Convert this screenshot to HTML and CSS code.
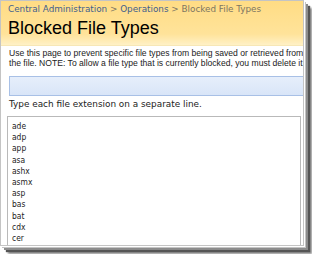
FILE: index.html
```html
<!DOCTYPE html>
<html>
<head>
<meta charset="utf-8">
<link rel="stylesheet" href="styles.css">
</head>
<body>
<div class="frame">
  <div class="header">
    <div class="crumbs"><span class="link">Central Administration</span> <span class="sep">&gt;</span> <span class="link">Operations</span> <span class="sep">&gt;</span> <span class="current">Blocked File Types</span></div>
    <h1 class="title">Blocked File Types</h1>
  </div>
  <div class="body">
    <p class="desc">Use this page to prevent specific file types from being saved or retrieved from<br>the file. NOTE: To allow a file type that is currently blocked, you must delete it</p>
    <div class="bar"></div>
    <div class="hint">Type each file extension on a separate line.</div>
    <div class="list">
      <div>ade</div>
      <div>adp</div>
      <div>app</div>
      <div>asa</div>
      <div>ashx</div>
      <div>asmx</div>
      <div>asp</div>
      <div>bas</div>
      <div>bat</div>
      <div>cdx</div>
      <div>cer</div>
      <div>chm</div>
    </div>
  </div>
</div>
</body>
</html>
```

FILE: styles.css
```css
html, body {
  margin: 0;
  padding: 0;
  background: #ffffff;
}
body {
  width: 312px;
  height: 254px;
  overflow: hidden;
}
.frame {
  width: 302px;
  height: 244px;
  border: 1px solid #c4c4c4;
  background: #ffffff;
  overflow: hidden;
  box-shadow: 1px 1px 0 #ffffff, 2px 2px 0 #c4c4c4, 4px 4px 0 #8c8c8c, 6px 6px 1px #555555, 8px 8px 2px #8a8a8a;
}
.header {
  height: 45px;
  padding: 3px 0 0 7px;
  box-sizing: border-box;
  background: linear-gradient(#ffdc84, #ffe39a 75%, #fff1c6);
  border-bottom: 1px solid #f7e7b6;
}
.crumbs {
  font-family: "DejaVu Sans", sans-serif;
  font-size: 8.8px;
  line-height: 10px;
  white-space: nowrap;
  color: #7d7662;
}
.crumbs .link {
  color: #3f5f8d;
}
.title {
  margin: 3px 0 0 0;
  font-family: "Liberation Sans", sans-serif;
  font-weight: normal;
  font-size: 18px;
  line-height: 22px;
  color: #000000;
  white-space: nowrap;
}
.body {
  padding: 2px 0 0 8px;
}
.desc {
  margin: 0;
  font-family: "Liberation Sans", sans-serif;
  font-size: 8.6px;
  line-height: 10px;
  color: #222222;
  white-space: nowrap;
}
.bar {
  margin-top: 8px;
  height: 18px;
  border: 1px solid #a8c0e6;
  border-right: none;
  background: linear-gradient(#e6eefb, #d9e5f8);
}
.hint {
  margin-top: 3px;
  font-family: "DejaVu Sans", sans-serif;
  font-size: 8.9px;
  line-height: 11px;
  color: #222222;
  white-space: nowrap;
}
.list {
  margin: 6px 0 0 -2px;
  width: 294px;
  height: 200px;
  border: 1px solid #b9b9b9;
  padding: 4px 0 0 4px;
  box-sizing: border-box;
  font-family: "DejaVu Sans Condensed", "DejaVu Sans", sans-serif;
  font-size: 8.4px;
  line-height: 11.2px;
  color: #1a1a1a;
}
```
